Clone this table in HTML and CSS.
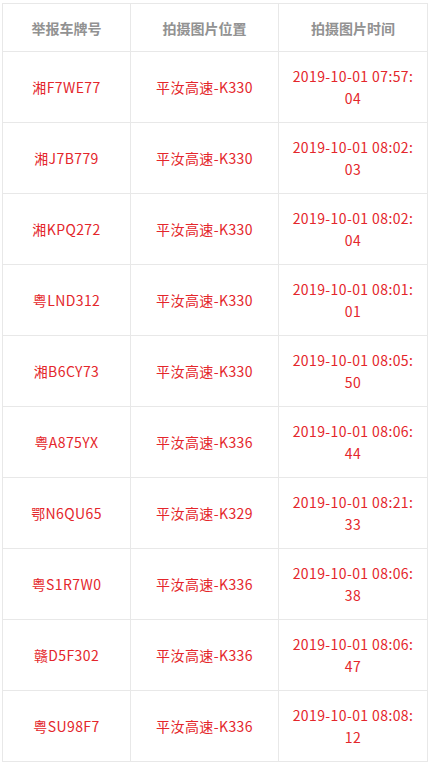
FILE: index.html
```html
<!DOCTYPE html>
<html lang="zh-CN">
<head>
  <meta charset="UTF-8">
  <title>举报记录</title>
  <link rel="stylesheet" href="styles.css">
</head>
<body>
  <div class="wrap">
    <table class="report">
      <colgroup>
        <col class="col-plate">
        <col class="col-place">
        <col class="col-time">
      </colgroup>
      <thead>
        <tr>
          <th>举报车牌号</th>
          <th>拍摄图片位置</th>
          <th>拍摄图片时间</th>
        </tr>
      </thead>
      <tbody>
        <tr><td>湘F7WE77</td><td>平汝高速-K330</td><td>2019-10-01 07:57:04</td></tr>
        <tr><td>湘J7B779</td><td>平汝高速-K330</td><td>2019-10-01 08:02:03</td></tr>
        <tr><td>湘KPQ272</td><td>平汝高速-K330</td><td>2019-10-01 08:02:04</td></tr>
        <tr><td>粤LND312</td><td>平汝高速-K330</td><td>2019-10-01 08:01:01</td></tr>
        <tr><td>湘B6CY73</td><td>平汝高速-K330</td><td>2019-10-01 08:05:50</td></tr>
        <tr><td>粤A875YX</td><td>平汝高速-K336</td><td>2019-10-01 08:06:44</td></tr>
        <tr><td>鄂N6QU65</td><td>平汝高速-K329</td><td>2019-10-01 08:21:33</td></tr>
        <tr><td>粤S1R7W0</td><td>平汝高速-K336</td><td>2019-10-01 08:06:38</td></tr>
        <tr><td>赣D5F302</td><td>平汝高速-K336</td><td>2019-10-01 08:06:47</td></tr>
        <tr><td>粤SU98F7</td><td>平汝高速-K336</td><td>2019-10-01 08:08:12</td></tr>
      </tbody>
    </table>
  </div>
</body>
</html>
```

FILE: styles.css
```css
body {
  margin: 0;
  background-color: #fff;
  font-family: "Noto Sans CJK SC", "Liberation Sans", sans-serif;
  font-size: 14px;
}

.wrap {
  padding: 3px 3px 0 2px;
}

.report {
  width: 425px;
  border-collapse: collapse;
  table-layout: fixed;
}

.col-plate {
  width: 128px;
}

.col-place {
  width: 148px;
}

.col-time {
  width: 149px;
}

.report th,
.report td {
  border: 1px solid #e8e8e8;
  text-align: center;
  padding: 0 12px;
  line-height: 22px;
  word-break: break-all;
}

.report th {
  height: 47px;
  color: #929292;
  font-weight: bold;
}

.report td {
  height: 70px;
  color: #e4262b;
  letter-spacing: 0.4px;
}
```
